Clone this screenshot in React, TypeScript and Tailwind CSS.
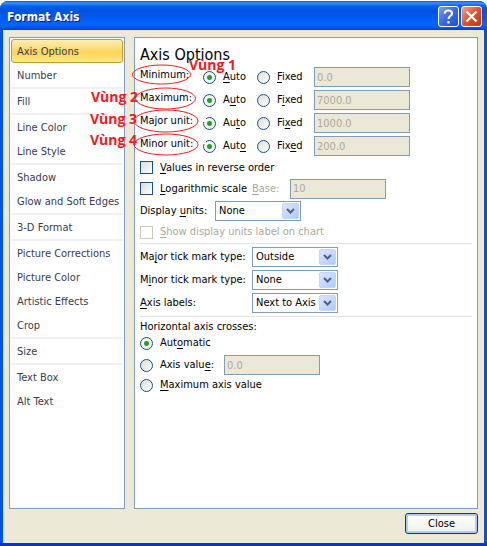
import React from "react";

const groups: string[][] = [
  ["Axis Options", "Number"],
  ["Fill"],
  ["Line Color", "Line Style"],
  ["Shadow", "Glow and Soft Edges"],
  ["3-D Format"],
  ["Picture Corrections", "Picture Color", "Artistic Effects", "Crop"],
  ["Size"],
  ["Text Box", "Alt Text"],
];

/* Renders a caption whose access key is marked with a leading "&". */
function Caption({ text }: { text: string }) {
  const at = text.indexOf("&");
  if (at < 0) return <>{text}</>;
  return (
    <>
      {text.slice(0, at)}
      <u className="underline-offset-2">{text[at + 1]}</u>
      {text.slice(at + 2)}
    </>
  );
}

function Radio({ name, text, checked = false }: { name: string; text: string; checked?: boolean }) {
  return (
    <label className="flex items-center gap-[7px] whitespace-nowrap">
      <input
        type="radio"
        name={name}
        defaultChecked={checked}
        className="h-[13px] w-[13px] shrink-0 appearance-none rounded-full border border-[#1c5180] bg-[linear-gradient(135deg,#dcdcd7,#ffffff)] checked:bg-[radial-gradient(circle,#21a121_0px,#21a121_2px,#f3f3f0_3px)]"
      />
      <span>
        <Caption text={text} />
      </span>
    </label>
  );
}

function Check({ text, disabled = false }: { text: string; disabled?: boolean }) {
  return (
    <label className={`flex items-center gap-[7px] whitespace-nowrap ${disabled ? "text-[#aca899]" : ""}`}>
      <input
        type="checkbox"
        disabled={disabled}
        className="h-[13px] w-[13px] shrink-0 appearance-none border border-[#1c5180] bg-gradient-to-br from-[#dcdcd7] to-white disabled:border-[#cac8bb] disabled:bg-none"
      />
      <span>
        <Caption text={text} />
      </span>
    </label>
  );
}

function Field({ label, value, id }: { label: string; value: string; id?: string }) {
  return (
    <input
      id={id}
      type="text"
      disabled
      aria-label={id ? undefined : label}
      defaultValue={value}
      className="h-5 w-24 border border-[#7f9db9] bg-[#ebe8d8] px-[2px] text-[#aca899]"
    />
  );
}

function Drop({ id, value, options }: { id: string; value: string; options: string[] }) {
  return (
    <div className="relative w-[86px]">
      <select
        id={id}
        defaultValue={value}
        className="block h-5 w-full appearance-none border border-[#7f9db9] bg-white pl-[3px]"
      >
        {options.map((o) => (
          <option key={o}>{o}</option>
        ))}
      </select>
      <span className="pointer-events-none absolute top-[2px] right-[2px] flex h-4 w-[17px] items-center justify-center rounded-xs border border-[#c3d3fd] bg-gradient-to-br from-[#dce6fe] to-[#b3c9fb]">
        <svg width="9" height="6" viewBox="0 0 9 6" fill="none" stroke="#4d6185" strokeWidth="2">
          <path d="M1 1l3.5 3.5L8 1" />
        </svg>
      </span>
    </div>
  );
}

const ranges = [
  { label: "Minimum:", auto: "&Auto", fixed: "&Fixed", value: "0.0" },
  { label: "Maximum:", auto: "A&uto", fixed: "F&ixed", value: "7000.0" },
  { label: "Major unit:", auto: "Au&to", fixed: "Fi&xed", value: "1000.0" },
  { label: "Minor unit:", auto: "Aut&o", fixed: "Fix&ed", value: "200.0" },
];

const ticks = [
  { id: "major", label: "Ma&jor tick mark type:", value: "Outside", options: ["None", "Inside", "Outside", "Cross"] },
  { id: "minor", label: "M&inor tick mark type:", value: "None", options: ["None", "Inside", "Outside", "Cross"] },
  { id: "labels", label: "&Axis labels:", value: "Next to Axis", options: ["None", "High", "Low", "Next to Axis"] },
];

const note = "absolute whitespace-nowrap font-['Open_Sans',sans-serif] text-[14px] leading-5 font-bold text-[#ed1c24]";

function Annotations() {
  return (
    <div className="pointer-events-none absolute inset-0">
      <span className="absolute top-[78px] left-[67px] h-[6px] w-[4px] bg-white" />
      <span className="absolute top-[102px] left-[67px] h-[4px] w-[4px] bg-white" />
      <svg className="absolute top-[24px] left-[-6px]" width="72" height="96" viewBox="0 0 72 96" fill="none" stroke="#ed1c24">
        <ellipse cx="32.5" cy="12.5" rx="29" ry="9.5" />
        <ellipse cx="36.5" cy="36.5" rx="30" ry="10.5" />
        <ellipse cx="37" cy="59" rx="32" ry="11" />
        <ellipse cx="37" cy="82.5" rx="32" ry="10.5" />
      </svg>
      <span className={`${note} top-[17px] left-[54px]`}>Vùng 1</span>
      <span className={`${note} top-[49px] left-[-44px]`}>Vùng 2</span>
      <span className={`${note} top-[71px] left-[-45px]`}>Vùng 3</span>
      <span className={`${note} top-[92px] left-[-45px]`}>Vùng 4</span>
    </div>
  );
}

export default function App() {
  return (
    <div className="flex min-h-screen flex-col bg-white pt-px font-['DejaVu_Sans_Condensed','DejaVu_Sans',sans-serif] text-[11px] leading-4 text-black">
      <div className="flex flex-1 flex-col overflow-hidden rounded-t-lg border-b-[3px] border-[#0831d9] bg-[#0054e3]">
        <header className="flex h-[29px] items-center justify-between bg-[linear-gradient(#0058e6_0px,#3a93ff_2px,#0560ee_5px,#0053e1_9px,#0059f0_16px,#0066ff_23px,#005bf0_26px,#003dd0_29px)] pr-[5px] pl-[7px]">
          <h1 className="pt-[3px] text-xs font-bold text-white [text-shadow:1px_1px_#0a1883]">
            Format Axis
          </h1>
          <div className="flex gap-[2px] pt-[2px]">
            <button aria-label="Help" className="flex h-[21px] w-[21px] items-center justify-center rounded-[3px] border border-white bg-gradient-to-br from-[#7b9cf5] via-[#3a68e4] to-[#1f50d4]">
              <svg width="11" height="15" viewBox="0 0 11 15" fill="none" stroke="white" strokeWidth="2.2">
                <path d="M1.8 4.5C1.8 2.5 3.2 1.5 5.3 1.5S9 2.6 9 4.4C9 6.8 5.5 6.8 5.5 10" />
                <path d="M5.5 12v2.4" />
              </svg>
            </button>
            <button aria-label="Close window" className="flex h-[21px] w-[21px] items-center justify-center rounded-[3px] border border-white bg-gradient-to-br from-[#f0a088] via-[#e0502c] to-[#c43610]">
              <svg width="13" height="13" viewBox="0 0 13 13" fill="none" stroke="white" strokeWidth="2.2">
                <path d="M1.5 1.5l10 10M11.5 1.5l-10 10" />
              </svg>
            </button>
          </div>
        </header>

        <div className="mx-[3px] flex flex-1 flex-col bg-[#ece9d8] px-[6px] pt-[7px] pb-[9px]">
          <div className="flex flex-1 gap-[9px]">
            <nav className="w-[116px] shrink-0 border border-[#7f9db9] bg-white p-px text-[#3b3b4d]">
              {groups.map((items, g) => (
                <ul key={items[0]} className={g > 0 ? "border-t-2 border-[#f0f0f6]" : ""}>
                  {items.map((item) => (
                    <li key={item}>
                      <button
                        className={
                          item === "Axis Options"
                            ? "block h-6 w-full rounded-[3px] border border-[#c29b29] bg-[linear-gradient(#fdeeb3,#fbdc7c_40%,#fdd455_55%,#ffe88c)] px-[5px] pt-px text-left whitespace-nowrap"
                            : "block h-6 w-full px-[6px] pt-px text-left whitespace-nowrap"
                        }
                      >
                        {item}
                      </button>
                    </li>
                  ))}
                </ul>
              ))}
            </nav>

            <main className="relative min-w-0 flex-1 border border-[#7f9db9] bg-white px-[5px]">
              <h2 className="flex h-[29px] items-center pt-[4px] text-base">Axis Options</h2>
              <div className="flex flex-col gap-[3px]">
                {ranges.map((r) => (
                  <div key={r.label} role="group" aria-label={r.label} className="grid h-5 grid-cols-[63px_54px_57px_96px] items-center">
                    <span className="pb-[4px] whitespace-nowrap">{r.label}</span>
                    <Radio name={r.label} text={r.auto} checked />
                    <Radio name={r.label} text={r.fixed} />
                    <Field label={r.label} value={r.value} />
                  </div>
                ))}
              </div>

              <div className="mt-px flex h-[21px] items-center">
                <Check text="&Values in reverse order" />
              </div>
              <div className="flex h-[21px] items-center">
                <div className="w-28">
                  <Check text="&Logarithmic scale" />
                </div>
                <label htmlFor="base" className="w-[38px] text-[#aca899]">
                  <Caption text="&Base:" />
                </label>
                <Field id="base" label="Base" value="10" />
              </div>
              <div className="mt-[2px] flex h-5 items-center">
                <label htmlFor="units" className="w-[75px] whitespace-nowrap">
                  <Caption text="Display &units:" />
                </label>
                <Drop id="units" value="None" options={["None", "Hundreds", "Thousands", "Millions"]} />
              </div>
              <div className="flex h-[22px] items-center">
                <Check text="&Show display units label on chart" disabled />
              </div>

              <div className="flex flex-col gap-[3px] border-y border-[#e2e2e2] py-[3px]">
                {ticks.map((t) => (
                  <div key={t.id} className="flex h-5 items-center">
                    <label htmlFor={t.id} className="w-28 whitespace-nowrap">
                      <Caption text={t.label} />
                    </label>
                    <Drop id={t.id} value={t.value} options={t.options} />
                  </div>
                ))}
              </div>

              <h3 className="mt-[2px]">Horizontal axis crosses:</h3>
              <div className="flex h-4 items-center">
                <Radio name="crosses" text="Aut&omatic" checked />
              </div>
              <div className="mt-1 flex h-5 items-center">
                <div className="w-[84px]">
                  <Radio name="crosses" text="Axis valu&e:" />
                </div>
                <Field label="Axis value" value="0.0" />
              </div>
              <div className="flex h-5 items-center">
                <Radio name="crosses" text="&Maximum axis value" />
              </div>

              <Annotations />
            </main>
          </div>

          <footer className="mt-1 flex justify-end">
            <button className="h-[21px] w-[73px] rounded-[3px] border border-[#003c74] bg-gradient-to-b from-white to-[#f0f0ea] leading-[15px] shadow-[inset_0_0_0_2px_#b4cdf5]">
              Close
            </button>
          </footer>
        </div>
      </div>
    </div>
  );
}
